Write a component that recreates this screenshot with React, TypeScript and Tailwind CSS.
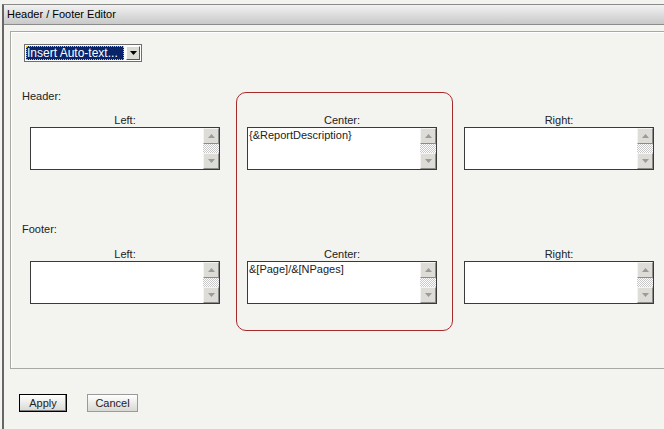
import React from 'react';

const checker =
  'bg-[repeating-conic-gradient(#c8c8c8_0_25%,#ffffff_0_50%)] bg-[length:2px_2px]';

function ScrollButton({ dir }: { dir: 'up' | 'down' }) {
  return (
    <div className="h-[16px] w-[16px] flex items-center justify-center bg-[#dedcd6] border border-t-[#f4f4f4] border-l-[#f4f4f4] border-r-[#8c8c8c] border-b-[#8c8c8c]">
      <svg width="7" height="4" viewBox="0 0 7 4">
        <path d={dir === 'up' ? 'M3.5 0L7 4H0Z' : 'M0 0H7L3.5 4Z'} fill="#9b9b9b" />
      </svg>
    </div>
  );
}

function TextBox({ label, text }: { label: string; text?: string }) {
  return (
    <div className="w-[190px] flex flex-col">
      <div className="h-[13px] leading-[13px] text-[11px] text-center text-[#222]">{label}</div>
      <div className="h-[43px] flex border border-[#3a3a3a] bg-white">
        <div className="flex-1 px-[1px] pt-[1px] text-[11px] leading-[13px] text-[#222]">{text}</div>
        <div className="w-[16px] flex flex-col">
          <ScrollButton dir="up" />
          <div className={`flex-1 ${checker}`} />
          <ScrollButton dir="down" />
        </div>
      </div>
    </div>
  );
}

function Row({ center }: { center: string }) {
  return (
    <div className="ml-[8px] flex gap-[27px]">
      <TextBox label="Left:" />
      <TextBox label="Center:" text={center} />
      <TextBox label="Right:" />
    </div>
  );
}

export default function App() {
  return (
    <div className="relative w-[664px] h-[429px] overflow-hidden bg-[#f3f3ef] pt-[4px] font-['Liberation_Sans',Tahoma,Arial,sans-serif]">
      <div className="ml-[2px] h-[425px] border-l-2 border-t border-[#8a8a8a] border-l-[#666]">
        {/* Title bar */}
        <div className="h-[20px] border-b border-[#8c8c8c] bg-gradient-to-b from-[#f2f2f2] to-[#c9c9c9] pl-[3px] text-[11px] leading-[19px] text-black">
          Header / Footer Editor
        </div>

        {/* Editor panel */}
        <div className="ml-[6px] mt-[6px] w-[700px] h-[338px] border border-r-0 border-[#a8a8a4] shadow-[inset_1px_1px_0_#ffffff] pl-[11px] pt-[12px]">
          <div className="ml-[2px] w-[118px] h-[18px] flex border border-[#6f6f6f] bg-white p-[1px]">
            <div className="flex-1 bg-[#0a246a] outline-1 outline-dotted outline-[#f0c000] -outline-offset-1 text-white text-[12px] leading-[14px] pl-[1px] whitespace-nowrap overflow-hidden">
              Insert Auto-text...
            </div>
            <div className="w-[14px] ml-[2px] flex items-center justify-center bg-[#dcdad4] border border-t-white border-l-white border-r-[#555] border-b-[#555]">
              <svg width="7" height="4" viewBox="0 0 7 4">
                <path d="M0 0H7L3.5 4Z" fill="#000" />
              </svg>
            </div>
          </div>

          <div className="mt-[28px] h-[13px] leading-[13px] text-[11px] text-[#222]">Header:</div>
          <div className="mt-[11px]">
            <Row center="{&ReportDescription}" />
          </div>

          <div className="mt-[53px] h-[13px] leading-[13px] text-[11px] text-[#222]">Footer:</div>
          <div className="mt-[12px]">
            <Row center="&[Page]/&[NPages]" />
          </div>
        </div>

        {/* Buttons */}
        <div className="ml-[15px] mt-[25px] flex gap-[20px]">
          <button className="w-[48px] h-[18px] border border-black bg-gradient-to-b from-white to-[#d8d8d4] shadow-[inset_-1px_-1px_0_#808080] text-[11px] leading-[14px] text-[#222]">
            Apply
          </button>
          <button className="w-[51px] h-[18px] border border-[#9a9a9a] bg-gradient-to-b from-white to-[#d8d8d4] text-[11px] leading-[14px] text-[#222]">
            Cancel
          </button>
        </div>
      </div>

      {/* Highlight around the center column */}
      <div className="absolute left-[236px] top-[92px] w-[217px] h-[239px] rounded-[10px] border border-[#a62c2c] pointer-events-none" />
    </div>
  );
}
